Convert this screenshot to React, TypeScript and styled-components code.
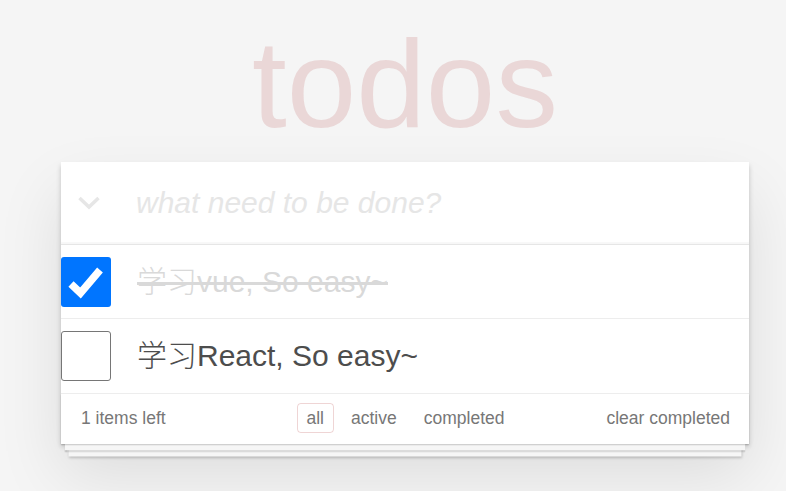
import React, { useState } from "react";
import styled, { createGlobalStyle } from "styled-components";

const GlobalStyle = createGlobalStyle`
  html, body {
    margin: 0;
    padding: 0;
    background: #f5f5f5;
  }
  body {
    font-family: "Liberation Sans", Arial, "Noto Sans CJK SC", sans-serif;
    font-size: 17.5px;
    line-height: 1.4em;
    color: #4d4d4d;
    font-weight: 300;
  }
`;

const Page = styled.div`
  min-height: 100vh;
  box-sizing: border-box;
  padding: 1px 0 0 61px;
`;

const Title = styled.h1`
  width: 688px;
  margin: 20px 0 16px;
  font-size: 125px;
  line-height: 1;
  font-weight: 100;
  text-align: center;
  color: rgba(175, 47, 47, 0.15);
`;

const TodoApp = styled.section`
  width: 688px;
  background: #fff;
  box-shadow: 0 2.5px 5px 0 rgba(0, 0, 0, 0.2), 0 31px 62px 0 rgba(0, 0, 0, 0.1);
`;

const Header = styled.header`
  display: flex;
  align-items: center;
  box-shadow: inset 0 -2px 1px rgba(0, 0, 0, 0.03);
`;

const ToggleAll = styled.div`
  width: 55px;
  display: flex;
  justify-content: center;
  align-items: center;
`;

const NewTodo = styled.input`
  flex: 1;
  border: none;
  outline: none;
  background: transparent;
  padding: 20px;
  font-family: inherit;
  font-size: 30px;
  line-height: 42px;
  height: 82px;
  box-sizing: border-box;
  color: #4d4d4d;

  &::placeholder {
    font-style: italic;
    font-weight: 300;
    color: #e6e6e6;
  }
`;

const List = styled.ul`
  margin: 0;
  padding: 0;
  list-style: none;
  border-top: 1px solid #e6e6e6;
`;

const Item = styled.li`
  display: flex;
  align-items: center;
  border-bottom: 1px solid #ededed;
`;

const CheckBox = styled.button<{ $checked: boolean }>`
  width: 50px;
  height: 50px;
  margin: 0;
  padding: 0;
  flex-shrink: 0;
  display: flex;
  align-items: center;
  justify-content: center;
  border-radius: 3px;
  box-sizing: border-box;
  cursor: pointer;
  border: ${(p) => (p.$checked ? "none" : "1.5px solid #767676")};
  background: ${(p) => (p.$checked ? "#0075ff" : "#fff")};
`;

const Label = styled.label<{ $done: boolean }>`
  flex: 1;
  padding: 18.75px 18.75px 18.5px 26px;
  font-size: 30px;
  line-height: 36px;
  font-family: "Liberation Sans", Arial, "Noto Sans CJK SC", sans-serif;
  color: ${(p) => (p.$done ? "#d9d9d9" : "#4d4d4d")};
  text-decoration: ${(p) => (p.$done ? "line-through" : "none")};
`;

const Footer = styled.footer`
  display: grid;
  grid-template-columns: 1fr auto 1fr;
  align-items: center;
  height: 50px;
  box-sizing: border-box;
  padding: 0 19px 1px 20px;
  color: #777;
  font-size: 17.5px;
  box-shadow: 0 1.25px 1.25px rgba(0, 0, 0, 0.2),
    0 10px 0 -3.75px #f6f6f6,
    0 11.25px 1.25px -3.75px rgba(0, 0, 0, 0.2),
    0 20px 0 -7.5px #f6f6f6,
    0 21.25px 2.5px -7.5px rgba(0, 0, 0, 0.2);
`;

const Count = styled.span`
  justify-self: start;
`;

const Filters = styled.ul`
  display: flex;
  margin: 0;
  padding: 0;
  list-style: none;
`;

const Filter = styled.a<{ $selected: boolean }>`
  margin: 0 3.75px;
  padding: 3.75px 8.75px;
  line-height: 21px;
  border: 1.25px solid ${(p) => (p.$selected ? "rgba(175, 47, 47, 0.2)" : "transparent")};
  border-radius: 3.75px;
  color: inherit;
  text-decoration: none;
  cursor: pointer;
`;

const ClearButton = styled.button`
  justify-self: end;
  border: none;
  background: none;
  padding: 0;
  font-family: inherit;
  font-size: 17.5px;
  color: #777;
  cursor: pointer;
`;

const Chevron = () => (
  <svg width="22" height="14" viewBox="0 0 22 14">
    <polyline points="1.5,2 11,11 20.5,2" fill="none" stroke="#e6e6e6" strokeWidth="3.5" />
  </svg>
);

const Check = () => (
  <svg width="50" height="50" viewBox="0 0 50 50">
    <polyline points="10,27 19.5,36 39,13" fill="none" stroke="#fff" strokeWidth="7.5" />
  </svg>
);

type Todo = { id: number; title: string; done: boolean };

const App: React.FC = () => {
  const [todos, setTodos] = useState<Todo[]>([
    { id: 1, title: "学习vue, So easy~", done: true },
    { id: 2, title: "学习React, So easy~", done: false },
  ]);
  const [filter, setFilter] = useState("all");

  const toggle = (id: number) =>
    setTodos(todos.map((t) => (t.id === id ? { ...t, done: !t.done } : t)));

  const left = todos.filter((t) => !t.done).length;

  return (
    <Page>
      <GlobalStyle />
      <Title>todos</Title>
      <TodoApp>
        <Header>
          <ToggleAll>
            <Chevron />
          </ToggleAll>
          <NewTodo placeholder="what need to be done?" />
        </Header>
        <List>
          {todos.map((todo) => (
            <Item key={todo.id}>
              <CheckBox $checked={todo.done} onClick={() => toggle(todo.id)}>
                {todo.done && <Check />}
              </CheckBox>
              <Label $done={todo.done}>{todo.title}</Label>
            </Item>
          ))}
        </List>
        <Footer>
          <Count>{left} items left</Count>
          <Filters>
            {["all", "active", "completed"].map((f) => (
              <li key={f}>
                <Filter $selected={filter === f} onClick={() => setFilter(f)}>
                  {f}
                </Filter>
              </li>
            ))}
          </Filters>
          <ClearButton onClick={() => setTodos(todos.filter((t) => !t.done))}>
            clear completed
          </ClearButton>
        </Footer>
      </TodoApp>
    </Page>
  );
};

export default App;
